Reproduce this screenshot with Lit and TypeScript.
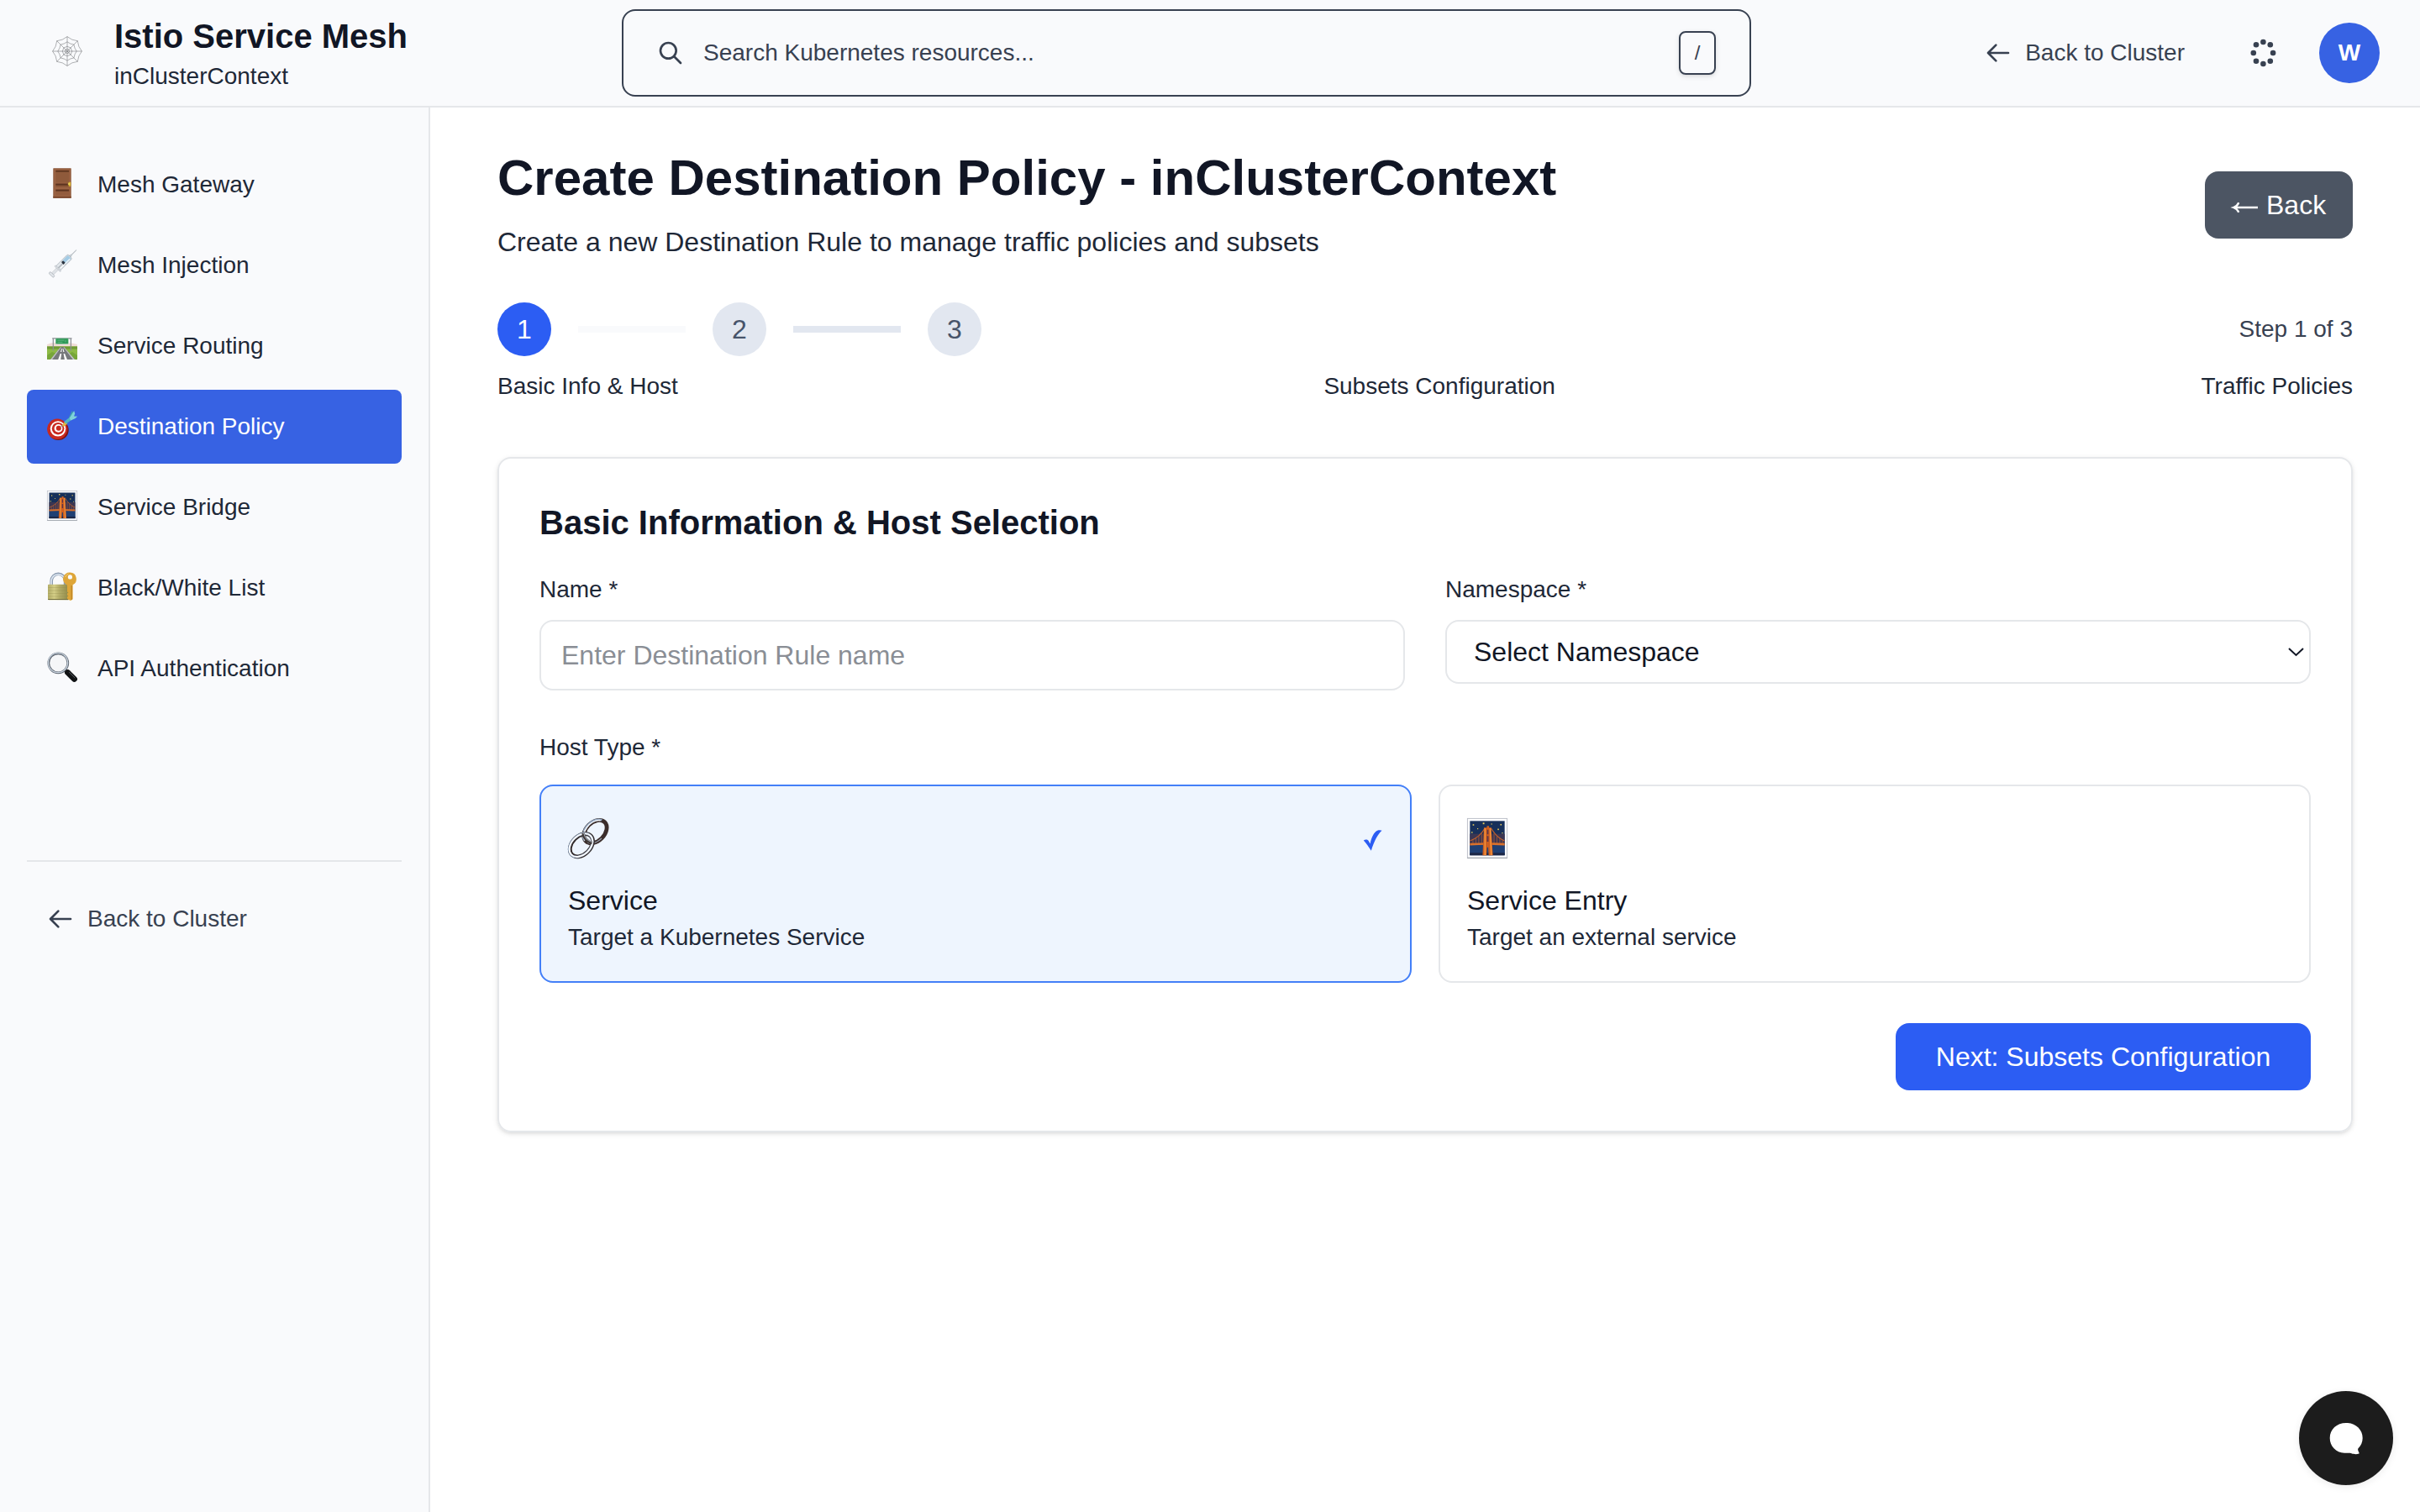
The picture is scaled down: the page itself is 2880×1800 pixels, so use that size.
import { LitElement, html, svg, css } from "lit";
import { customElement, state } from "lit/decorators.js";
import { classMap } from "lit/directives/class-map.js";

const SPOKES = [0, 1, 2, 3, 4, 5, 6, 7];

function webPoint(radius: number, step: number): [number, number] {
  const angle = (step * Math.PI) / 4;
  return [18 + radius * Math.cos(angle), 18 + radius * Math.sin(angle)];
}

function webRing(radius: number, sag: number): string {
  const [sx, sy] = webPoint(radius, 0);
  let d = `M${sx.toFixed(2)} ${sy.toFixed(2)}`;
  for (const i of SPOKES) {
    const [cx, cy] = webPoint(radius * sag, i + 0.5);
    const [x, y] = webPoint(radius, i + 1);
    d += `Q${cx.toFixed(2)} ${cy.toFixed(2)} ${x.toFixed(2)} ${y.toFixed(2)}`;
  }
  return d + "Z";
}

const webIcon = svg`
  <g fill="none" stroke="#77797c" stroke-opacity=".72" stroke-width=".8">
    ${SPOKES.map((i) => {
      const [x, y] = webPoint(17.6, i);
      return svg`<line x1="18" y1="18" x2=${x} y2=${y}></line>`;
    })}
    <path d=${webRing(17.4, 0.8)}></path>
    <path d=${webRing(11.2, 0.82)}></path>
    <path d=${webRing(5.8, 0.9)}></path>
    <circle cx="18" cy="18" r="2.6"></circle>
  </g>`;

const doorIcon = svg`
  <rect x="7.3" y=".2" width="21.4" height="35.6" rx=".6" fill="#8a5436"></rect>
  <rect x="8.3" y="1.2" width="19.4" height="33.6" fill="#9b6343"></rect>
  <rect x="10.3" y="2.8" width="15.8" height="14.6" fill="#8f5a3b"></rect>
  <rect x="10.3" y="2.8" width="15.8" height="1.9" fill="#5f3620"></rect>
  <rect x="10.3" y="18.6" width="15.8" height="4.2" fill="#8b5537"></rect>
  <rect x="10.3" y="18.6" width="15.8" height="2" fill="#5c341f"></rect>
  <rect x="10.3" y="25.6" width="15.8" height="6.6" fill="#935c3d"></rect>
  <rect x="10.3" y="25.6" width="15.8" height="2" fill="#5c341f"></rect>
  <rect x="7.3" y="33.8" width="21.4" height="2" fill="#7d4a2f"></rect>
  <rect x="25.6" y="16.8" width="2.6" height="4.9" rx=".5" fill="#d8b52f"></rect>
  <rect x="24.8" y="18.2" width="2.6" height="1.6" rx=".6" fill="#f2dc66"></rect>`;

const syringeIcon = svg`
  <g transform="translate(35 1.5) rotate(45)">
    <rect x="-.35" y="0" width=".8" height="9" fill="#a9b0b7"></rect>
    <path d="M-1 8h2l.8 3.4h-3.6z" fill="#c3cbd2"></path>
    <rect x="-3.6" y="11" width="7.2" height="20" rx="1.6" fill="#e4e9ed" stroke="#a9b0b8" stroke-width=".8"></rect>
    <rect x="-2.8" y="11.8" width="5.6" height="9" rx="1" fill="#a3cbe5"></rect>
    <rect x="-2.4" y="20.2" width="4.8" height="3.2" rx="1.4" fill="#2b3440"></rect>
    <rect x="-.9" y="23.6" width="1.8" height="13" fill="#b3b9c0"></rect>
    <rect x="1.4" y="13" width="1" height="16" fill="#fff"></rect>
    <rect x="-4.8" y="30.4" width="9.6" height="1.9" rx=".9" fill="#d8dce0" stroke="#a8afb7" stroke-width=".4"></rect>
    <rect x="-1.6" y="32" width="3.2" height="8" fill="#dfe3e7" stroke="#b0b6bd" stroke-width=".4"></rect>
    <rect x="-3.8" y="40.2" width="7.6" height="2.8" rx="1.3" fill="#e2e6ea" stroke="#9ea5ad" stroke-width=".6"></rect>
  </g>`;

const roadIcon = svg`
  <path d="M0 18q9-4 18-1 10-2 18 1v6H0z" fill="#efdcd6"></path>
  <rect x="0" y="20.4" width="36" height="15.6" fill="#8dba45"></rect>
  <path d="M0 20.4h36v3H0z" fill="#6f9a35"></path>
  <path d="M0 31l6-4 5 2-7 7H0zM36 31l-6-4-4 2 7 7h3z" fill="#77a638"></path>
  <path d="M16 21.2h4.4L33 36H4z" fill="#77797c"></path>
  <path d="M16 21.2h.9L6.2 36H4zM19.500 21.2h.9L33 36h-2.2z" fill="#c3c5c6"></path>
  <path d="M17.2 23h.7l-.7 4h-1.200zM15.700 29h1.500l-1 7h-3zM18.600 23h.7l1.200 4h-1.200zM19.600 29h1.500l2.800 7h-3z" fill="#fff"></path>
  <g stroke="#8b8f93" stroke-width="1.2" fill="none">
    <path d="M7.3 10.4v15M28.4 10.4v15M6.2 10.8h23.3"></path>
  </g>
  <rect x="10.2" y="10.8" width="15.2" height="6.8" rx=".8" fill="#2f9a58" stroke="#bfe0ca" stroke-width=".4"></rect>
  <path d="M12.4 13.2h8M12.4 15.4h6M22 13v2.4" stroke="#7cc497" stroke-width=".6" fill="none"></path>`;

const targetIcon = svg`
  <ellipse cx="13.4" cy="24" rx="12.3" ry="12" fill="#7c1512"></ellipse>
  <ellipse cx="12.2" cy="22.8" rx="12.1" ry="12.2" fill="#c92a20"></ellipse>
  <circle cx="13" cy="22.4" r="9.2" fill="#fff"></circle>
  <circle cx="13.1" cy="22.2" r="7.3" fill="#c92a20"></circle>
  <circle cx="13.5" cy="21.9" r="4.9" fill="#fff"></circle>
  <circle cx="13.8" cy="21.7" r="3" fill="#c92a20"></circle>
  <path d="M14.6 21.2l5-4.4 1.4 1.5z" fill="#8a8f94"></path>
  <path d="M18 19l3.400-5.800 3 3-4.200 3.600z" fill="#e7b53a"></path>
  <path d="M20.300 14l8.200-6.600 2 3.400-8 6z" fill="#53b6c2"></path>
  <path d="M26 8.800L30 .8l1.600 4.600-2.400 5z" fill="#3d9fb0"></path>
  <path d="M26.800 9.600l5.400-8.600 1 3.600-1.200 2.800 4.200.4-2.800 2.400-5.200 2.200z" fill="#7fd3d9"></path>`;

const bridgeIcon = svg`
  <rect x=".3" y=".3" width="35.4" height="35.4" fill="#fdfdfe" stroke="#b9bcc6" stroke-width=".7"></rect>
  <path d="M.3 35.5h35.4" stroke="#9ba1a8" stroke-width=".8"></path>
  <rect x="2.5" y="2.5" width="31" height="30.6" fill="#17305a"></rect>
  <rect x="2.5" y="14" width="31" height="10" fill="#3b3652"></rect>
  <rect x="2.5" y="24" width="31" height="9.1" fill="#1f3f73"></rect>
  <path d="M2.5 31h31v2.1h-31z" fill="#1c2746"></path>
  <g fill="#e6cc5c">
    <rect x="5" y="5.4" width="1.2" height="1.2"></rect><rect x="14" y="4" width="1.4" height="1.4"></rect>
    <rect x="29.6" y="5.2" width="1.2" height="1.2"></rect><rect x="27.2" y="9.4" width="1.2" height="1.2"></rect>
    <rect x="3.8" y="12.2" width="1.1" height="1.1"></rect><rect x="9" y="9" width=".9" height=".9"></rect>
    <rect x="21.4" y="4.8" width=".9" height=".9"></rect><rect x="31" y="12.8" width=".9" height=".9"></rect>
  </g>
  <g fill="none" stroke="#c9622a" stroke-width=".8">
    <path d="M16 8.600Q11.500 17 2.600 20.200M21.200 8.600Q26 17 33.400 20.200"></path>
    <path d="M13 13v10M10.400 16v7M7.800 18v5M5.200 19.500v4M24 13v10M26.600 16v7M29.200 18v5M31.600 19.500v4" stroke-width=".6" stroke="#a75a35"></path>
  </g>
  <path d="M2.500 22.400q15.500-1 31 0v2q-15.500-1-31 0z" fill="#d8702c"></path>
  <path d="M15 8.400h2.600V7h2v1.400h1.800l1.600 24.700h-3.800l-.4-7h-1l-.4 7h-3.600z" fill="#cc5f22"></path>
  <path d="M16 9v24M20.600 9l1 24" stroke="#f5963c" stroke-width="1.1" fill="none"></path>
  <path d="M17.800 10.400h1.200v4h-1.200zM17.700 16h1.400v5h-1.400z" fill="#57344a"></path>`;

const lockIcon = svg`
  <defs>
    <linearGradient id="brass" x1="0" x2="1"><stop offset="0" stop-color="#b3ad68"></stop><stop offset=".3" stop-color="#d3cd86"></stop><stop offset=".55" stop-color="#b4ad68"></stop><stop offset="1" stop-color="#8f8949"></stop></linearGradient>
  </defs>
  <path d="M5.200 17v-5.500a8.200 8.200 0 0 1 16.400 0V17" fill="none" stroke="#8b9bb0" stroke-width="3.600"></path>
  <path d="M5 17v-5.500a8.400 8.400 0 0 1 16.600-1" fill="none" stroke="#dfe8f3" stroke-width="1.600"></path>
  <rect x="1" y="15.800" width="25" height="18.400" rx="1" fill="url(#brass)"></rect>
  <path d="M1.400 19.500h24M1.400 23h24M1.400 26.500h24M1.400 30h24" stroke="#8e8848" stroke-opacity=".35" stroke-width=".8"></path>
  <path d="M1.200 33.500h24.600" stroke="#716c38" stroke-width="1"></path>
  <path fill-rule="evenodd" d="M27.400 1.600a7.700 7.700 0 0 1 3.200 14.600v17l-2.400 1.800-2.600-1-1.600-1.600v-2l1.400-.8-1.400-1v-2.200l1.400-.8-1.400-1.200V17.300l-.2-.9A7.700 7.700 0 0 1 27.400 1.600zm0 2.700a2.600 2.600 0 1 0 0 5.200 2.600 2.600 0 0 0 0-5.200z" fill="#dea639"></path>
  <path d="M29.200 17v17" stroke="#b57c20" stroke-width="1"></path>
  <path d="M21.600 7a6.500 6.500 0 0 1 4-4" fill="none" stroke="#f3cf74" stroke-width="1"></path>`;

const magnifierIcon = svg`
  <path d="M21.500 21.500l3.500 3.500" stroke="#4c5056" stroke-width="3.400"></path>
  <circle cx="13.300" cy="13.300" r="11.500" fill="#f5f6f8" stroke="#5d656f" stroke-width="2.700"></circle>
  <circle cx="13" cy="13" r="11.600" fill="none" stroke="#c9d4e0" stroke-width="1.300"></circle>
  <path d="M24.600 24.600l7.800 7.800" stroke="#111315" stroke-width="7" stroke-linecap="round"></path>
  <path d="M26.400 24.200l6.600 6.600" stroke="#5d6268" stroke-width="1" stroke-linecap="round"></path>`;

const linkIcon = svg`
  <g fill="none">
    <g transform="rotate(-45 32.500 15.700)">
      <ellipse cx="32.200" cy="15.900" rx="15.900" ry="11" stroke="#3b2d2b" stroke-width="4.800"></ellipse>
      <path d="M16 14.800a16.200 11.600 0 0 1 31.500-3" stroke="#8fa3bd" stroke-width="2.600"></path>
      <path d="M16 14.800a16.200 11.600 0 0 1 30-4" stroke="#f4f8fd" stroke-width="1.500"></path>
      <path d="M16.400 18.500q3 7.800 15.500 8.400" stroke="#97a0ad" stroke-width="1.200"></path>
    </g>
    <g transform="rotate(-45 15.600 32.200)">
      <ellipse cx="15.800" cy="32.400" rx="15.800" ry="10.900" stroke="#332b2a" stroke-width="4.800"></ellipse>
      <ellipse cx="15.300" cy="31.900" rx="16.200" ry="11.200" stroke="#8ea1ba" stroke-width="2.800"></ellipse>
      <ellipse cx="15.500" cy="32.100" rx="16.100" ry="11.100" stroke="#fafcfe" stroke-width="1.900"></ellipse>
    </g>
    <path d="M18 18q2 9.500 10.500 11.500" stroke="#3f3836" stroke-width="3.600"></path>
    <path d="M18.800 18q2 8.600 9.600 10.400" stroke="#aab4c1" stroke-width="1.100"></path>
  </g>`;

const backArrow = html`<svg class="stroke-icon" viewBox="0 0 24 24"><path d="M10 19l-7-7m0 0l7-7m-7 7h18"></path></svg>`;

const NAV = [
  { label: "Mesh Gateway", icon: doorIcon },
  { label: "Mesh Injection", icon: syringeIcon },
  { label: "Service Routing", icon: roadIcon },
  { label: "Destination Policy", icon: targetIcon },
  { label: "Service Bridge", icon: bridgeIcon },
  { label: "Black/White List", icon: lockIcon },
  { label: "API Authentication", icon: magnifierIcon },
];

const HOSTS = [
  { title: "Service", text: "Target a Kubernetes Service", icon: linkIcon, box: "0 0 48 48" },
  { title: "Service Entry", text: "Target an external service", icon: bridgeIcon, box: "0 0 36 36" },
];

const DOTS = [
  [15.4, 5], [23.8, 8.2], [27.1, 18], [23.8, 27.8],
  [15.4, 31], [7, 27.8], [3.8, 18], [7, 8.2],
];

@customElement("app-root")
export class AppRoot extends LitElement {
  @state() private active = "Destination Policy";
  @state() private host = "Service";

  static styles = css`
    :host {
      display: flex;
      flex-direction: column;
      width: 100%;
      height: 100vh;
      box-sizing: border-box;
      font-family: "Liberation Sans", Arial, sans-serif;
      font-size: 28px;
      line-height: 40px;
      color: #1e2837;
      background: #fff;
      overflow: hidden;
    }
    *, *::before { box-sizing: border-box; }
    svg { display: block; flex: none; overflow: visible; }
    h1, h2, p { margin: 0; }
    button, input { font: inherit; }
    button { border: 0; cursor: pointer; }

    .stroke-icon {
      width: 32px; height: 32px;
      fill: none; stroke: currentColor; stroke-width: 2;
      stroke-linecap: round; stroke-linejoin: round;
    }

    .header {
      display: grid;
      grid-template-columns: 740px 1344px 1fr;
      align-items: center;
      height: 128px;
      flex: none;
      padding-right: 48px;
      background: #f9fafc;
      border-bottom: 2px solid #e5e7ea;
    }
    .brand { display: flex; align-items: center; gap: 38px; padding-left: 62px; }
    .brand svg { width: 36px; height: 36px; margin-top: -4px; }
    .brand-name { font-size: 40px; line-height: 56px; font-weight: 700; color: #111625; }
    .search {
      display: flex; align-items: center; gap: 23px;
      height: 104px; padding: 0 40px;
      border: 2px solid #384151; border-radius: 16px;
      color: #384151;
    }
    .search span { flex: 1; }
    .kbd {
      display: flex; align-items: center; justify-content: center;
      width: 44px; height: 52px;
      border: 2px solid #384151; border-radius: 8px;
      font-size: 24px; line-height: 32px;
      box-shadow: 0 2px 6px rgba(0, 0, 0, 0.1), 0 2px 4px -2px rgba(0, 0, 0, 0.1);
    }
    .tools { display: flex; align-items: center; justify-content: flex-end; color: #384151; }
    .back-link { display: flex; align-items: center; gap: 16px; color: #384151; }
    .dots { width: 32px; height: 36px; margin-left: 78px; margin-right: 50px; fill: #384151; }
    .avatar {
      display: flex; align-items: center; justify-content: center;
      width: 72px; height: 72px; border-radius: 50%;
      background: #3762e3; color: #fff; font-weight: 700;
    }

    .body { display: flex; flex: 1; min-height: 0; }
    .sidebar {
      width: 512px; flex: none;
      padding: 48px 32px;
      background: #f9fafc;
      border-right: 2px solid #e5e7ea;
    }
    .nav { display: flex; flex-direction: column; gap: 8px; }
    .nav-item {
      display: flex; align-items: center; gap: 24px;
      height: 88px; padding: 0 24px;
      border-radius: 8px; color: #1e2837;
    }
    .nav-item svg { width: 36px; height: 36px; margin-bottom: 4px; }
    .nav-item.active { background: #3762e3; color: #fff; }
    .side-foot { margin-top: 184px; padding: 48px 24px 0; border-top: 2px solid #e5e7ea; }

    .main { flex: 1; padding: 48px 80px 0; }
    .page-head { display: flex; align-items: center; justify-content: space-between; }
    h1 { font-size: 60px; line-height: 72px; font-weight: 700; color: #111625; }
    .subtitle { margin-top: 16px; font-size: 32px; line-height: 48px; }
    .btn-back {
      display: flex; align-items: center; gap: 9px;
      height: 80px; width: 176px; padding: 0 0 0 32px; border-radius: 16px;
      background: #4c5563; color: #fff; font-size: 32px; line-height: 48px;
    }
    .btn-back svg { width: 32px; height: 14px; margin-top: 6px; fill: none; stroke: currentColor; stroke-width: 2.300; }
    .steps { display: flex; align-items: center; gap: 32px; margin-top: 48px; }
    .step {
      display: flex; align-items: center; justify-content: center;
      width: 64px; height: 64px; border-radius: 50%;
      background: #e2e7f0; color: #47546a; font-size: 32px;
    }
    .step.on { background: #2c5df3; color: #fff; }
    .bar { width: 128px; height: 8px; background: #e2e7f0; }
    .bar.done { background: #f9fafc; }
    .step-count { margin-left: auto; color: #384151; }
    .step-labels { display: flex; justify-content: space-between; margin-top: 16px; }

    .card {
      margin-top: 64px; padding: 48px;
      border: 2px solid #e5e7ea; border-radius: 16px;
      box-shadow: 0 2px 6px rgba(0, 0, 0, 0.1), 0 2px 4px -2px rgba(0, 0, 0, 0.1);
    }
    h2 { font-size: 40px; line-height: 56px; font-weight: 700; color: #111625; }
    .fields { display: grid; grid-template-columns: 1fr 1fr; gap: 48px; margin-top: 32px; }
    .field { display: flex; flex-direction: column; gap: 16px; }
    .input {
      height: 84px; padding: 16px 24px; margin: 0;
      border: 2px solid #e5e7ea; border-radius: 16px;
      background: #fff; font-size: 32px; line-height: 48px; outline: none;
    }
    .input::placeholder { color: #8a8e95; opacity: 1; }
    .select {
      display: flex; align-items: center; justify-content: space-between;
      height: 76px; padding: 0 6px 0 32px;
      border: 2px solid #e5e7ea; border-radius: 16px;
      background: #fff; color: #111625; font-size: 32px; line-height: 48px; text-align: left;
    }
    .select svg { width: 20px; height: 12px; fill: none; stroke: #111625; stroke-width: 2; }
    .host-label { margin-top: 48px; }
    .hosts { display: grid; grid-template-columns: 1fr 1fr; gap: 32px; margin-top: 24px; }
    .host {
      padding: 32px; height: 236px;
      border: 2px solid #e5e7ea; border-radius: 16px; background: #fff;
    }
    .host.active { border-color: #437ff8; background: #eef5fe; }
    .host-top { display: flex; align-items: center; justify-content: space-between; height: 64px; margin-bottom: 16px; }
    .host-icon { width: 48px; height: 48px; margin-bottom: 4px; }
    .check { width: 24px; height: 25px; fill: #2c5df3; }
    .host-title { font-size: 32px; line-height: 48px; color: #111625; }
    .actions { display: flex; justify-content: flex-end; margin-top: 48px; }
    .btn-next {
      height: 80px; width: 494px; padding: 0; border-radius: 16px;
      background: #2c5df3; color: #fff; font-size: 32px; line-height: 48px;
    }
    .chat {
      position: absolute; right: 32px; bottom: 32px;
      width: 112px; height: 112px; padding: 0; border-radius: 50%;
      background: #1c1c1c;
      box-shadow: 0 2px 10px rgba(0, 0, 0, 0.08);
    }
  `;

  render() {
    return html`
      <header class="header">
        <div class="brand">
          <svg viewBox="0 0 36 36">${webIcon}</svg>
          <div>
            <div class="brand-name">Istio Service Mesh</div>
            <div>inClusterContext</div>
          </div>
        </div>
        <div class="search">
          <svg class="stroke-icon" viewBox="0 0 24 24"><path d="M21 21l-6-6m2-5a7 7 0 11-14 0 7 7 0 0114 0z"></path></svg>
          <span>Search Kubernetes resources...</span>
          <div class="kbd">/</div>
        </div>
        <div class="tools">
          <div class="back-link">${backArrow}<span>Back to Cluster</span></div>
          <svg class="dots" viewBox="0 0 32 36">
            ${DOTS.map(([x, y]) => svg`<circle cx=${x} cy=${y} r="3.300"></circle>`)}
          </svg>
          <div class="avatar">W</div>
        </div>
      </header>
      <div class="body">
        <aside class="sidebar">
          <nav class="nav">
            ${NAV.map(
              (item) => html`
                <div
                  class=${classMap({ "nav-item": true, active: item.label === this.active })}
                  @click=${() => (this.active = item.label)}
                >
                  <svg viewBox="0 0 36 36">${item.icon}</svg>
                  <span>${item.label}</span>
                </div>
              `,
            )}
          </nav>
          <div class="side-foot">
            <div class="back-link">${backArrow}<span>Back to Cluster</span></div>
          </div>
        </aside>
        <main class="main">
          <div class="page-head">
            <div>
              <h1>Create Destination Policy - inClusterContext</h1>
              <p class="subtitle">Create a new Destination Rule to manage traffic policies and subsets</p>
            </div>
            <button class="btn-back">
              <svg viewBox="0 0 32 14"><path d="M31 7H2.500M8.300 1.200Q6.500 5.500 2 7Q6.500 8.500 8.300 12.800"></path></svg>
              <span>Back</span>
            </button>
          </div>
          <div class="steps">
            <div class="step on">1</div>
            <div class="bar done"></div>
            <div class="step">2</div>
            <div class="bar"></div>
            <div class="step">3</div>
            <div class="step-count">Step 1 of 3</div>
          </div>
          <div class="step-labels">
            <span>Basic Info &amp; Host</span>
            <span>Subsets Configuration</span>
            <span>Traffic Policies</span>
          </div>
          <section class="card">
            <h2>Basic Information &amp; Host Selection</h2>
            <div class="fields">
              <div class="field">
                <label>Name *</label>
                <input class="input" type="text" placeholder="Enter Destination Rule name" />
              </div>
              <div class="field">
                <label>Namespace *</label>
                <button class="select">
                  <span>Select Namespace</span>
                  <svg viewBox="0 0 20 12"><path d="M2 2L10.500 10L19 2"></path></svg>
                </button>
              </div>
            </div>
            <div class="host-label">Host Type *</div>
            <div class="hosts">
              ${HOSTS.map(
                (h) => html`
                  <div
                    class=${classMap({ host: true, active: h.title === this.host })}
                    @click=${() => (this.host = h.title)}
                  >
                    <div class="host-top">
                      <svg class="host-icon" viewBox=${h.box}>${h.icon}</svg>
                      ${h.title === this.host
                        ? html`<svg class="check" viewBox="0 0 24 25">
                            <path d="M.800 12.600C2.500 11.200 5.200 11 6.500 12.800L8.600 16.400C10 9 13.600 1.800 17.200.700C19.200.100 21.500.200 22.600.800C17.600 5 13.400 13.400 9.800 24.800C7 20.400 4 16 .800 12.600Z"></path>
                          </svg>`
                        : ""}
                    </div>
                    <div class="host-title">${h.title}</div>
                    <div>${h.text}</div>
                  </div>
                `,
              )}
            </div>
            <div class="actions">
              <button class="btn-next">Next: Subsets Configuration</button>
            </div>
          </section>
        </main>
      </div>
      <button class="chat">
        <svg viewBox="0 0 112 112" fill="#fff">
          <path d="M56 38C67 38 75.700 45.500 75.700 56C75.700 61 73.500 65.300 70.500 68.300C69.300 69.800 71 72 71.700 74C72 75.300 66 75.800 62.500 74.300C60 73.300 58 74 54 73.800C44 73.300 36.700 65.500 36.700 56C36.700 45.500 45 38 56 38Z"></path>
        </svg>
      </button>
    `;
  }
}
